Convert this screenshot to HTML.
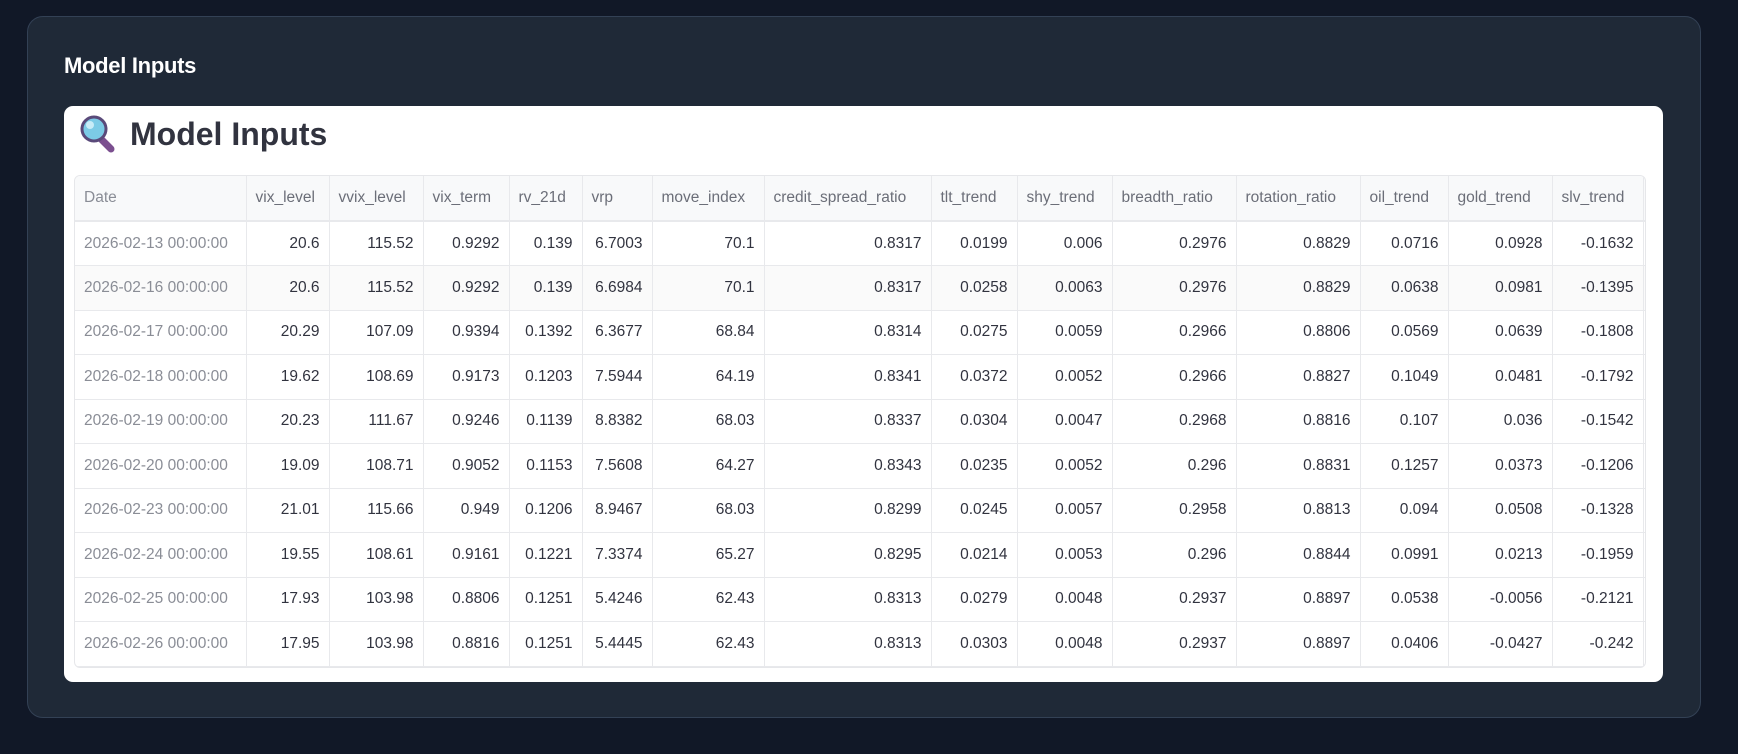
<!DOCTYPE html>
<html><head><meta charset="utf-8"><style>
*{box-sizing:border-box;margin:0;padding:0}
body{width:1738px;height:754px;background:#111827;font-family:"Liberation Sans",sans-serif;position:relative;overflow:hidden}
.card{position:absolute;left:27px;top:16px;width:1674px;height:702px;background:#1f2937;border:1px solid #334155;border-radius:16px}
.h{position:absolute;left:64px;top:53px;color:#fff;font-weight:bold;font-size:22px;letter-spacing:-0.3px}
.panel{position:absolute;left:64px;top:106px;width:1599px;height:576px;background:#fff;border-radius:9px;overflow:hidden}
.t2{position:absolute;left:80px;top:115px;font-size:32px;color:#31333f;font-weight:600;display:flex;align-items:center;gap:14px}
.tbl{position:absolute;left:74px;top:175px;width:1572px;height:493px;border:1px solid #e6e7ea;border-radius:6px;overflow:hidden}
table{border-collapse:collapse;table-layout:fixed;width:1570px;font-size:15.5px;color:#31333f}
td,th{height:44.5px;border-right:1px solid #e8e9ec;border-bottom:1px solid #e8e9ec;padding:0 9px;text-align:right;font-weight:normal;white-space:nowrap;overflow:hidden}
th{background:#f8f9fa;color:#6b6e78;text-align:left;height:45px;border-bottom:2px solid #e8e9ec}
th:first-child,td:first-child{text-align:left;color:#8a8d96}
tr.g td{background:#fafafa}
</style></head><body>
<div class="card"></div>
<div class="h">Model Inputs</div>
<div class="panel"></div>
<div class="t2"><svg width="36" height="38" viewBox="0 0 36 38"><line x1="21" y1="24" x2="31" y2="34" stroke="#7b4f8f" stroke-width="7" stroke-linecap="round"/><circle cx="14" cy="14" r="12" fill="#7ccbe6" stroke="#5a4a7a" stroke-width="3"/><circle cx="10" cy="10" r="4" fill="#c8ecf7"/></svg><span>Model Inputs</span></div>
<div class="tbl"><table>
<colgroup><col style="width:171px"><col style="width:83px"><col style="width:94px"><col style="width:86px"><col style="width:73px"><col style="width:70px"><col style="width:112px"><col style="width:167px"><col style="width:86px"><col style="width:95px"><col style="width:124px"><col style="width:124px"><col style="width:88px"><col style="width:104px"><col style="width:91px"><col style="width:2px"></colgroup>
<tr><th>Date</th><th>vix_level</th><th>vvix_level</th><th>vix_term</th><th>rv_21d</th><th>vrp</th><th>move_index</th><th>credit_spread_ratio</th><th>tlt_trend</th><th>shy_trend</th><th>breadth_ratio</th><th>rotation_ratio</th><th>oil_trend</th><th>gold_trend</th><th>slv_trend</th><th></th></tr>
<tr><td>2026-02-13 00:00:00</td><td>20.6</td><td>115.52</td><td>0.9292</td><td>0.139</td><td>6.7003</td><td>70.1</td><td>0.8317</td><td>0.0199</td><td>0.006</td><td>0.2976</td><td>0.8829</td><td>0.0716</td><td>0.0928</td><td>-0.1632</td><td></td></tr>
<tr class="g"><td>2026-02-16 00:00:00</td><td>20.6</td><td>115.52</td><td>0.9292</td><td>0.139</td><td>6.6984</td><td>70.1</td><td>0.8317</td><td>0.0258</td><td>0.0063</td><td>0.2976</td><td>0.8829</td><td>0.0638</td><td>0.0981</td><td>-0.1395</td><td></td></tr>
<tr><td>2026-02-17 00:00:00</td><td>20.29</td><td>107.09</td><td>0.9394</td><td>0.1392</td><td>6.3677</td><td>68.84</td><td>0.8314</td><td>0.0275</td><td>0.0059</td><td>0.2966</td><td>0.8806</td><td>0.0569</td><td>0.0639</td><td>-0.1808</td><td></td></tr>
<tr><td>2026-02-18 00:00:00</td><td>19.62</td><td>108.69</td><td>0.9173</td><td>0.1203</td><td>7.5944</td><td>64.19</td><td>0.8341</td><td>0.0372</td><td>0.0052</td><td>0.2966</td><td>0.8827</td><td>0.1049</td><td>0.0481</td><td>-0.1792</td><td></td></tr>
<tr><td>2026-02-19 00:00:00</td><td>20.23</td><td>111.67</td><td>0.9246</td><td>0.1139</td><td>8.8382</td><td>68.03</td><td>0.8337</td><td>0.0304</td><td>0.0047</td><td>0.2968</td><td>0.8816</td><td>0.107</td><td>0.036</td><td>-0.1542</td><td></td></tr>
<tr><td>2026-02-20 00:00:00</td><td>19.09</td><td>108.71</td><td>0.9052</td><td>0.1153</td><td>7.5608</td><td>64.27</td><td>0.8343</td><td>0.0235</td><td>0.0052</td><td>0.296</td><td>0.8831</td><td>0.1257</td><td>0.0373</td><td>-0.1206</td><td></td></tr>
<tr><td>2026-02-23 00:00:00</td><td>21.01</td><td>115.66</td><td>0.949</td><td>0.1206</td><td>8.9467</td><td>68.03</td><td>0.8299</td><td>0.0245</td><td>0.0057</td><td>0.2958</td><td>0.8813</td><td>0.094</td><td>0.0508</td><td>-0.1328</td><td></td></tr>
<tr><td>2026-02-24 00:00:00</td><td>19.55</td><td>108.61</td><td>0.9161</td><td>0.1221</td><td>7.3374</td><td>65.27</td><td>0.8295</td><td>0.0214</td><td>0.0053</td><td>0.296</td><td>0.8844</td><td>0.0991</td><td>0.0213</td><td>-0.1959</td><td></td></tr>
<tr><td>2026-02-25 00:00:00</td><td>17.93</td><td>103.98</td><td>0.8806</td><td>0.1251</td><td>5.4246</td><td>62.43</td><td>0.8313</td><td>0.0279</td><td>0.0048</td><td>0.2937</td><td>0.8897</td><td>0.0538</td><td>-0.0056</td><td>-0.2121</td><td></td></tr>
<tr><td>2026-02-26 00:00:00</td><td>17.95</td><td>103.98</td><td>0.8816</td><td>0.1251</td><td>5.4445</td><td>62.43</td><td>0.8313</td><td>0.0303</td><td>0.0048</td><td>0.2937</td><td>0.8897</td><td>0.0406</td><td>-0.0427</td><td>-0.242</td><td></td></tr>
</table></div>
</body></html>
